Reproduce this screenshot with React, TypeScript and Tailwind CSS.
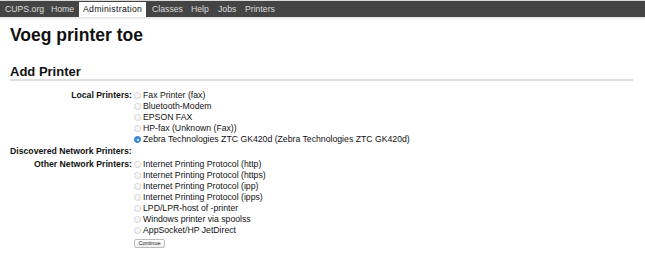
import React from "react";

const font = { fontFamily: '"Liberation Sans", Arial, sans-serif' };

function Radio({ checked }: { checked?: boolean }) {
  if (checked) {
    return (
      <span className="inline-flex w-[7px] h-[7px] rounded-full bg-[#3d8ee6] border border-[#2f78c8] items-center justify-center shrink-0">
        <span className="w-[2px] h-[2px] rounded-full bg-white" />
      </span>
    );
  }
  return (
    <span className="inline-block w-[7px] h-[7px] rounded-full border border-[#d2d2d2] bg-gradient-to-b from-white to-[#f2f2f2] shrink-0" />
  );
}

function Option({ label, checked }: { label: string; checked?: boolean }) {
  return (
    <div className="flex items-center h-[11px] gap-[2px]">
      <Radio checked={checked} />
      <span className="text-[8.7px] leading-[11px] text-[#111] whitespace-nowrap">{label}</span>
    </div>
  );
}

function Group({ label, options }: { label: string; options: { l: string; c?: boolean }[] }) {
  return (
    <div className="flex gap-[2px]">
      <div className="w-[122px] text-right font-bold text-[8.7px] leading-[11px] text-[#111] whitespace-nowrap">
        {label}
      </div>
      <div className="flex flex-col">
        {options.map((o) => (
          <Option key={o.l} label={o.l} checked={o.c} />
        ))}
      </div>
    </div>
  );
}

export default function App() {
  return (
    <div className="w-[645px] h-[261px] bg-white overflow-hidden relative" style={font}>
      <div className="h-[1px] bg-[#d8d8d8]" />
      <nav className="h-[16px] bg-[#444444] flex items-end text-[8.7px] text-[#dcdcdc]">
        <div className="w-[51px] pl-[5px] h-[16px] leading-[16px]">CUPS.org</div>
        <div className="w-[28px] h-[16px] leading-[16px]">Home</div>
        <div className="w-[67px] pl-[4px] h-[15px] leading-[15px] bg-white text-[#111] tracking-[0.3px]">
          Administration
        </div>
        <div className="w-[45px] pl-[6px] h-[16px] leading-[16px]">Classes</div>
        <div className="w-[27px] h-[16px] leading-[16px]">Help</div>
        <div className="w-[27px] h-[16px] leading-[16px]">Jobs</div>
        <div className="h-[16px] leading-[16px]">Printers</div>
      </nav>
      <div className="h-[3px] bg-gradient-to-b from-[#e2e2e2] to-white" />

      <div className="pl-[10px] pr-[12px]">
        <h1 className="mt-[5px] text-[17.5px] leading-[20px] font-bold text-[#111]">Voeg printer toe</h1>
        <h2 className="mt-[19px] text-[13px] leading-[15px] font-bold text-[#111] border-b-2 border-[#dedede]">
          Add Printer
        </h2>

        <div className="mt-[9px] flex flex-col">
          <Group
            label="Local Printers:"
            options={[
              { l: "Fax Printer (fax)" },
              { l: "Bluetooth-Modem" },
              { l: "EPSON FAX" },
              { l: "HP-fax (Unknown (Fax))" },
              { l: "Zebra Technologies ZTC GK420d (Zebra Technologies ZTC GK420d)", c: true },
            ]}
          />
          <div className="font-bold text-[8.7px] leading-[11px] text-[#111] mt-[1px]">Discovered Network Printers:</div>
          <div className="mt-[2px]">
            <Group
              label="Other Network Printers:"
              options={[
                { l: "Internet Printing Protocol (http)" },
                { l: "Internet Printing Protocol (https)" },
                { l: "Internet Printing Protocol (ipp)" },
                { l: "Internet Printing Protocol (ipps)" },
                { l: "LPD/LPR-host of -printer" },
                { l: "Windows printer via spoolss" },
                { l: "AppSocket/HP JetDirect" },
              ]}
            />
          </div>
          <div className="pl-[124px] mt-[3px]">
            <button className="h-[9px] w-[31px] rounded-[2px] border border-[#bdbdbd] bg-gradient-to-b from-white to-[#ececec] text-[5.5px] leading-[7px] text-[#222] flex items-center justify-center">
              Continue
            </button>
          </div>
        </div>
      </div>
    </div>
  );
}
